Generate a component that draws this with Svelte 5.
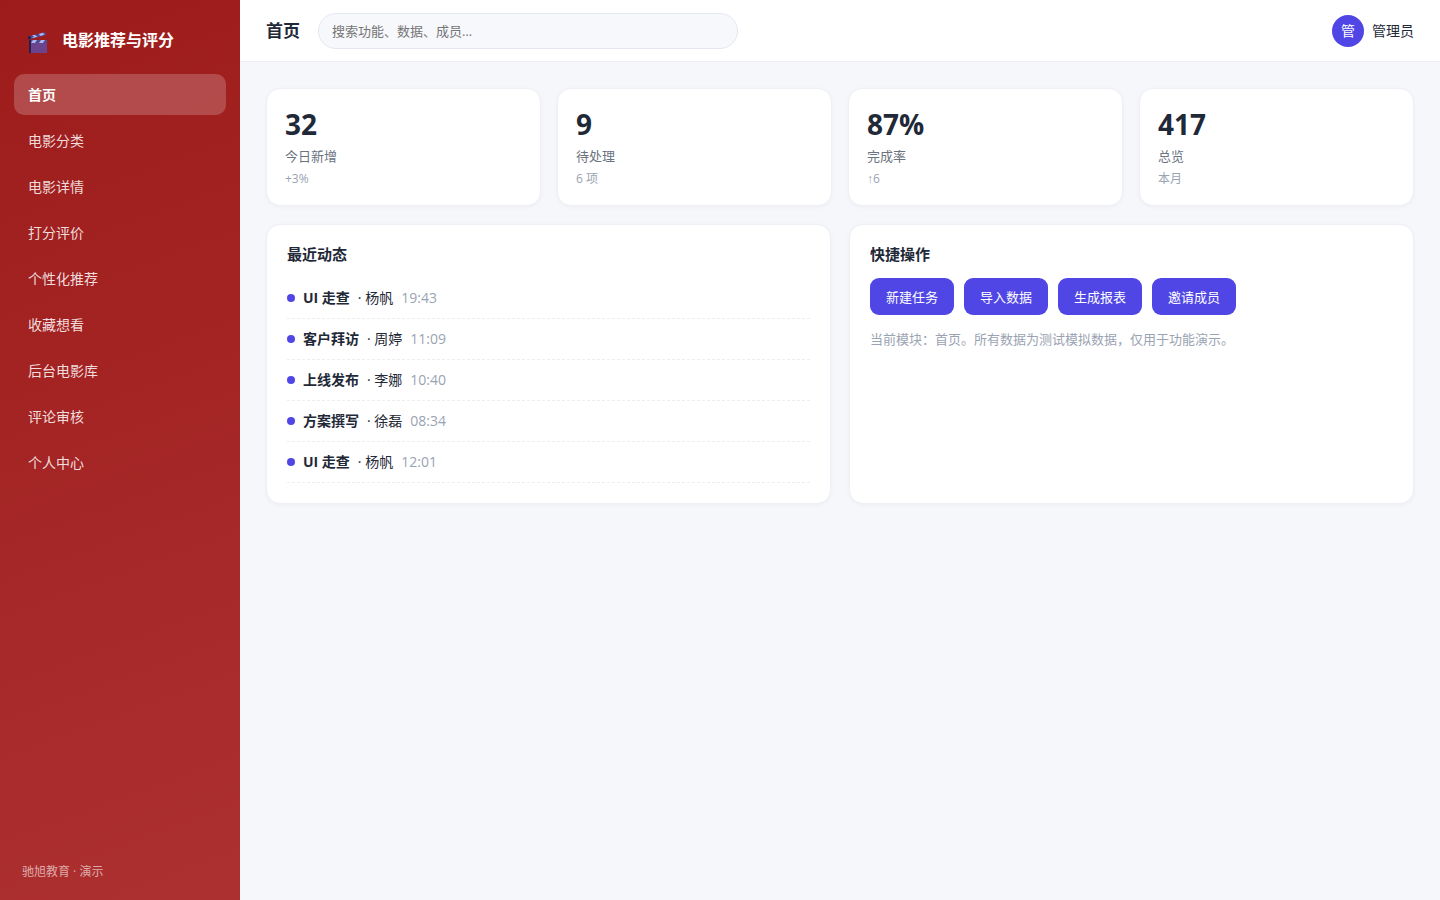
<script>
  let current = "首页";
  let keyword = "";

  const menus = [
    "首页",
    "电影分类",
    "电影详情",
    "打分评价",
    "个性化推荐",
    "收藏想看",
    "后台电影库",
    "评论审核",
    "个人中心",
  ];

  const stats = [
    { value: "32", label: "今日新增", sub: "+3%" },
    { value: "9", label: "待处理", sub: "6 项" },
    { value: "87%", label: "完成率", sub: "↑6" },
    { value: "417", label: "总览", sub: "本月" },
  ];

  const activities = [
    { title: "UI 走查", user: "杨帆", time: "19:43" },
    { title: "客户拜访", user: "周婷", time: "11:09" },
    { title: "上线发布", user: "李娜", time: "10:40" },
    { title: "方案撰写", user: "徐磊", time: "08:34" },
    { title: "UI 走查", user: "杨帆", time: "12:01" },
  ];

  const actions = ["新建任务", "导入数据", "生成报表", "邀请成员"];
</script>

<div class="layout">
  <aside class="sidebar">
    <div class="brand">
      <svg class="logo" viewBox="0 0 20 22" aria-hidden="true">
        <path d="M0 4.5 L17.5 0 L18 3 L1 7.5 L0 7 Z" fill="#524a91" />
        <path d="M0 4.5 L2.5 4 L3 7 L0 7.5 Z" fill="#2d1c49" />
        <path d="M4 3.5 L6.5 2.8 L9.5 4.8 L6 5.8 L4 5.5 L6 4.5 Z M11 1.8 L15 0.8 L16.5 2.8 L12 4 Z" fill="#a9b4f0" />
        <rect x="1" y="8" width="18" height="13" fill="#6b4490" />
        <rect x="1" y="8" width="18" height="3" fill="#524a91" />
        <rect x="1" y="8" width="2" height="13" fill="#2d1c49" />
        <path d="M5 8 L9 8 L7 11 L3 11 Z M13 8 L17 8 L15 11 L11 11 Z" fill="#a9b4f0" />
      </svg>
      <span>电影推荐与评分</span>
    </div>
    <nav>
      {#each menus as menu}
        <button class="menu" class:active={menu === current} on:click={() => (current = menu)}>{menu}</button>
      {/each}
    </nav>
    <div class="copyright">驰旭教育 · 演示</div>
  </aside>

  <div class="main">
    <header>
      <h1>{current}</h1>
      <input type="search" aria-label="搜索" placeholder="搜索功能、数据、成员…" bind:value={keyword} />
      <div class="user">
        <span class="avatar">管</span>
        <span>管理员</span>
      </div>
    </header>

    <main>
      <section class="stats">
        {#each stats as item}
          <div class="card stat">
            <div class="value">{item.value}</div>
            <div class="label">{item.label}</div>
            <div class="sub">{item.sub}</div>
          </div>
        {/each}
      </section>

      <section class="panels">
        <div class="card panel">
          <h2>最近动态</h2>
          <ul>
            {#each activities as item}
              <li>
                <span class="dot"></span>
                <strong>{item.title}</strong>
                <span>· {item.user}</span>
                <time>{item.time}</time>
              </li>
            {/each}
          </ul>
        </div>

        <div class="card panel">
          <h2>快捷操作</h2>
          <div class="actions">
            {#each actions as action}
              <button class="action">{action}</button>
            {/each}
          </div>
          <p>当前模块：{current}。所有数据为测试模拟数据，仅用于功能演示。</p>
        </div>
      </section>
    </main>
  </div>
</div>

<style>
  :global(body) {
    margin: 0;
    background: #f5f7fb;
  }

  .layout {
    display: flex;
    min-height: 100vh;
    font-family: "Open Sans", "Liberation Sans", "Noto Sans CJK SC", sans-serif;
    font-size: 14px;
    line-height: 20px;
    color: #1f2937;
  }

  * {
    box-sizing: border-box;
  }

  button,
  input {
    font-family: inherit;
  }

  .sidebar {
    display: flex;
    flex-direction: column;
    flex: none;
    width: 240px;
    padding: 22px 14px 21px;
    background: linear-gradient(160deg, #9d1b1b, #ad3030);
    color: #fff;
  }

  .brand {
    display: flex;
    align-items: center;
    gap: 14px;
    height: 36px;
    margin-bottom: 16px;
    padding: 0 14px;
    font-size: 16px;
    font-weight: 700;
  }

  .logo {
    width: 20px;
    height: 22px;
    margin-top: 6px;
  }

  nav {
    display: flex;
    flex-direction: column;
    gap: 5px;
  }

  .menu {
    height: 41px;
    padding: 0 14px 2px;
    border: none;
    border-radius: 10px;
    background: none;
    color: rgba(255, 255, 255, 0.85);
    font-size: 14px;
    text-align: left;
    cursor: pointer;
  }

  .menu.active {
    background: rgba(255, 255, 255, 0.2);
    color: #fff;
    font-weight: 700;
  }

  .copyright {
    margin-top: auto;
    padding: 0 8px;
    font-size: 12px;
    line-height: 14px;
    color: rgba(255, 255, 255, 0.6);
  }

  .main {
    flex: 1;
    min-width: 0;
  }

  header {
    display: flex;
    align-items: center;
    gap: 18px;
    height: 62px;
    padding: 0 26px;
    border-bottom: 1px solid #eceef4;
    background: #fff;
  }

  h1 {
    margin: 0;
    font-size: 17px;
    font-weight: 700;
  }

  input {
    flex: 0 1 420px;
    min-width: 0;
    height: 36px;
    padding: 0 13px;
    border: 1px solid #e5e7f0;
    border-radius: 18px;
    outline: none;
    background: #f7f8fc;
    font-size: 13px;
    appearance: none;
  }

  input::placeholder {
    color: #757575;
  }

  .user {
    display: flex;
    align-items: center;
    gap: 8px;
    margin-left: auto;
  }

  .avatar {
    width: 32px;
    border-radius: 50%;
    background: #4f46e5;
    color: #fff;
    line-height: 32px;
    text-align: center;
  }

  main {
    display: grid;
    gap: 18px;
    padding: 26px;
  }

  .card {
    border: 1px solid #eef0f5;
    border-radius: 14px;
    background: #fff;
    box-shadow: 0 1px 4px rgba(15, 23, 42, 0.04);
  }

  .stats {
    display: grid;
    grid-template-columns: repeat(4, 1fr);
    gap: 16px;
  }

  .stat {
    padding: 18px;
  }

  .value {
    font-size: 28px;
    font-weight: 700;
    line-height: 34px;
  }

  .label {
    margin-top: 5px;
    font-size: 13px;
    color: #6b7280;
  }

  .sub {
    margin-top: 5px;
    font-size: 12px;
    line-height: 16px;
    color: #9aa3b2;
  }

  .panels {
    display: grid;
    grid-template-columns: repeat(2, 1fr);
    gap: 18px;
  }

  .panel {
    padding: 20px;
  }

  h2 {
    margin: 0 0 14px;
    font-size: 15px;
    font-weight: 700;
    line-height: 19px;
  }

  ul {
    margin: 0;
    padding: 0;
    list-style: none;
  }

  li {
    display: flex;
    align-items: center;
    gap: 8px;
    padding: 10px 0;
    border-bottom: 1px dashed #eceef2;
  }

  .dot {
    width: 8px;
    height: 8px;
    border-radius: 50%;
    background: #4f46e5;
  }

  time {
    color: #9aa3b2;
  }

  .actions {
    display: flex;
    flex-wrap: wrap;
    gap: 10px;
  }

  .action {
    height: 37px;
    padding: 0 16px;
    border: none;
    border-radius: 9px;
    background: #4f46e5;
    color: #fff;
    font-size: 13px;
    cursor: pointer;
  }

  p {
    margin: 14px 0 0;
    font-size: 13px;
    color: #9aa3b2;
  }
</style>
